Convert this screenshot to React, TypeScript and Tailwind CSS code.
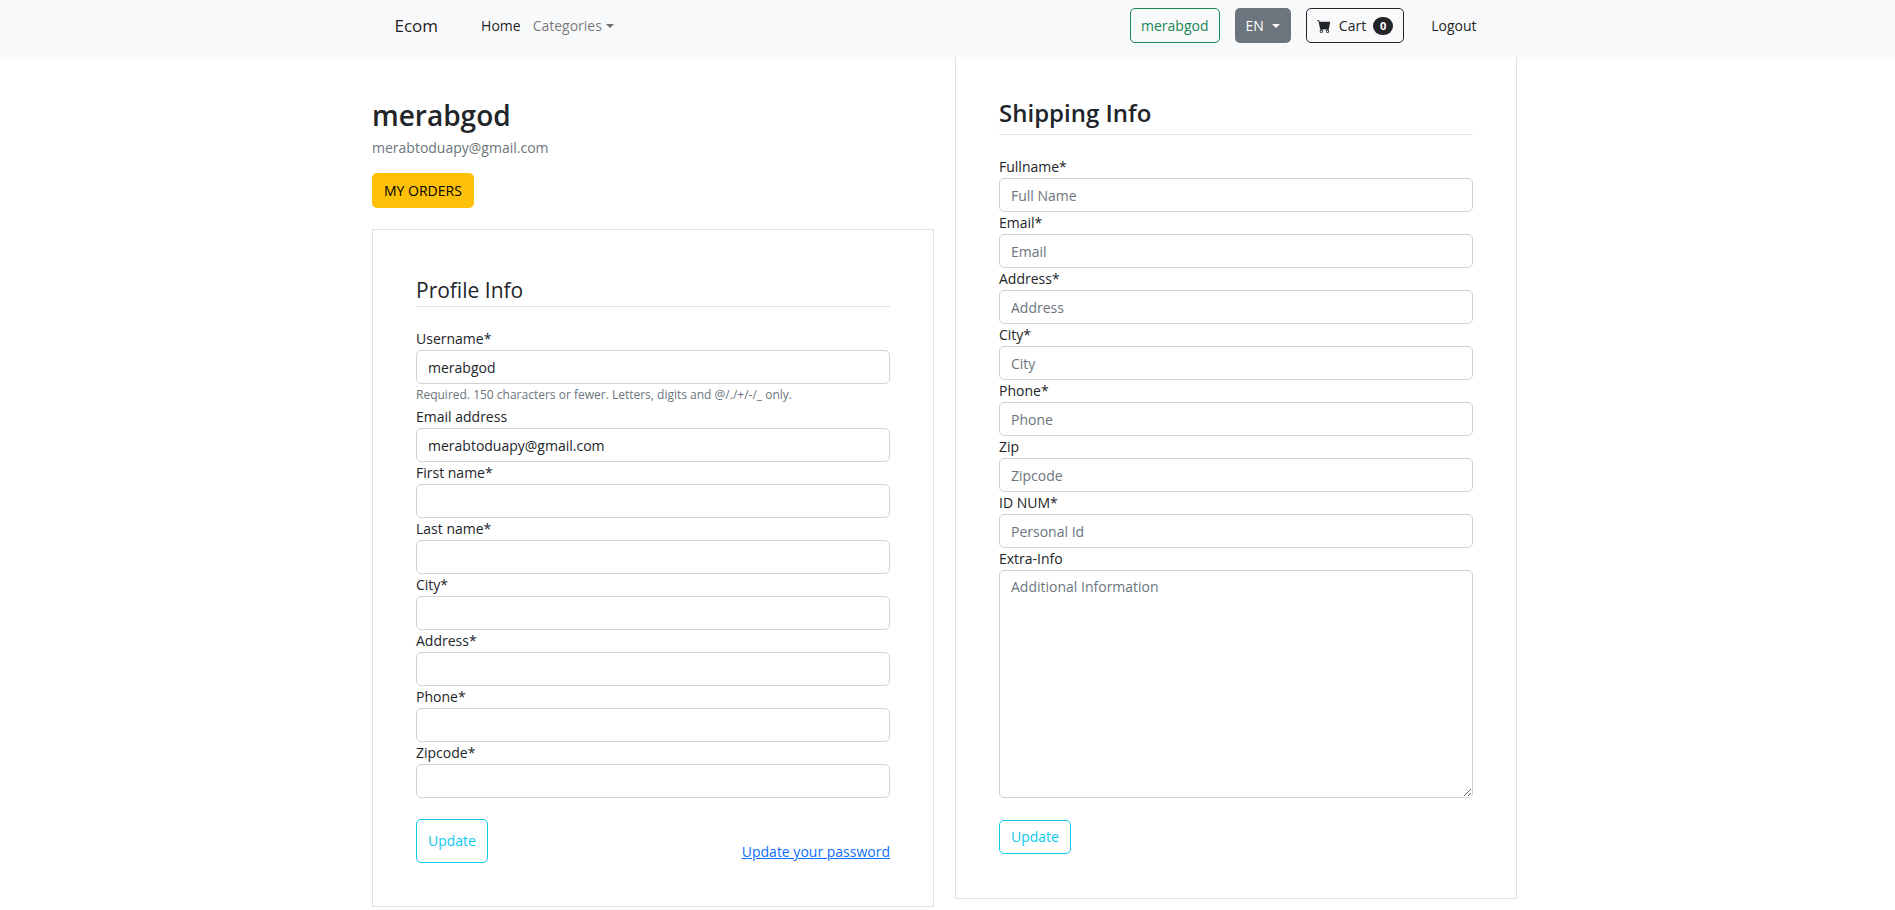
import { useId } from "react";
import { BsCartFill } from "react-icons/bs";

type FieldProps = {
  label: string;
  type?: string;
  value?: string;
  placeholder?: string;
  help?: string;
};

const control =
  "block w-full rounded-[5px] border border-[#ced4da] bg-white px-[11px] placeholder:text-[#6c757d] placeholder:opacity-100";

function Field({ label, type = "text", value, placeholder, help }: FieldProps) {
  const id = useId();
  return (
    <div>
      <label htmlFor={id} className="block">
        {label}
      </label>
      <input id={id} type={type} defaultValue={value} placeholder={placeholder} className={`${control} h-[34px]`} />
      {help && <p className="text-xs leading-[22px] text-[#6c757d]">{help}</p>}
    </div>
  );
}

function Caret() {
  return <span className="inline-block border-x-4 border-t-4 border-x-transparent border-t-current" />;
}

function Navbar() {
  return (
    <nav className="h-[57px] bg-[#f8f9fb] pr-7 pl-4">
      <div className="mx-auto flex h-[51px] max-w-[1094px] items-center">
        <a href="#" className="mr-[43px] text-[17px] text-black/90">
          Ecom
        </a>
        <a href="#" className="text-black/90">
          Home
        </a>
        <button type="button" className="ml-3 flex items-center gap-1 text-black/55">
          Categories
          <Caret />
        </button>
        <div className="ml-auto flex items-center gap-[15px]">
          <a
            href="#"
            className="flex h-[35px] items-center rounded-[5px] border border-[#198754] px-[10px] text-[#198754]"
          >
            merabgod
          </a>
          <button
            type="button"
            className="flex h-[35px] items-center gap-2 rounded-[5px] bg-[#6c757d] px-[11px] text-white"
          >
            EN
            <Caret />
          </button>
          <button
            type="button"
            className="flex h-[35px] items-center rounded-[5px] border border-[#212529] px-[10px] text-[#212529]"
          >
            <BsCartFill className="mr-2 size-[14px]" />
            Cart
            <span className="ml-[7px] flex h-[18px] w-5 items-center justify-center rounded-full bg-[#212529] text-[11px] font-bold text-white">
              0
            </span>
          </button>
          <a href="#" className="px-3 text-black/90">
            Logout
          </a>
        </div>
      </div>
    </nav>
  );
}

export default function App() {
  return (
    <div className="bg-white font-['Open_Sans','Noto_Sans',sans-serif] text-[14px] leading-[22px] text-[#212529]">
      <Navbar />
      <main className="pr-[22px] pl-4">
        <div className="mx-auto grid max-w-[1145px] grid-cols-2 items-start gap-[21px]">
          <section>
            <h1 className="pt-10 text-[28px] leading-9 font-semibold">merabgod</h1>
            <p className="mt-1 text-[#6c757d]">merabtoduapy@gmail.com</p>
            <a
              href="#"
              className="mt-[14px] mb-[21px] inline-flex h-[35px] items-center rounded-[5px] bg-[#ffc107] px-3 align-top text-black"
            >
              MY ORDERS
            </a>
            <form className="border border-[#dee2e6] p-[43px]">
              <h2 className="mb-[21px] border-b border-[#dee2e6] pt-[3px] pb-[2px] text-[21px] leading-7">
                Profile Info
              </h2>
              <Field
                label="Username*"
                value="merabgod"
                help="Required. 150 characters or fewer. Letters, digits and @/./+/-/_ only."
              />
              <Field label="Email address" type="email" value="merabtoduapy@gmail.com" />
              <Field label="First name*" />
              <Field label="Last name*" />
              <Field label="City*" />
              <Field label="Address*" />
              <Field label="Phone*" />
              <Field label="Zipcode*" />
              <div className="mt-[21px] flex items-end justify-between">
                <button type="button" className="h-11 rounded-[5px] border border-[#0dcaf0] px-[11px] text-[#0dcaf0]">
                  Update
                </button>
                <a href="#" className="text-[#0d6efd] underline">
                  Update your password
                </a>
              </div>
            </form>
          </section>

          <form className="border border-t-0 border-[#dee2e6] px-[43px] pt-10 pb-11">
            <h2 className="mb-[21px] border-b border-[#dee2e6] pb-[5px] text-2xl leading-8 font-semibold">
              Shipping Info
            </h2>
            <Field label="Fullname*" placeholder="Full Name" />
            <Field label="Email*" type="email" placeholder="Email" />
            <Field label="Address*" placeholder="Address" />
            <Field label="City*" placeholder="City" />
            <Field label="Phone*" placeholder="Phone" />
            <Field label="Zip" placeholder="Zipcode" />
            <Field label="ID NUM*" placeholder="Personal Id" />
            <label htmlFor="extra-info" className="block">
              Extra-Info
            </label>
            <textarea
              id="extra-info"
              placeholder="Additional Information"
              className={`${control} h-[228px] resize-y py-[5px]`}
            />
            <button
              type="button"
              className="mt-[22px] block h-[34px] rounded-[5px] border border-[#0dcaf0] px-[11px] text-[#0dcaf0]"
            >
              Update
            </button>
          </form>
        </div>
      </main>
    </div>
  );
}
